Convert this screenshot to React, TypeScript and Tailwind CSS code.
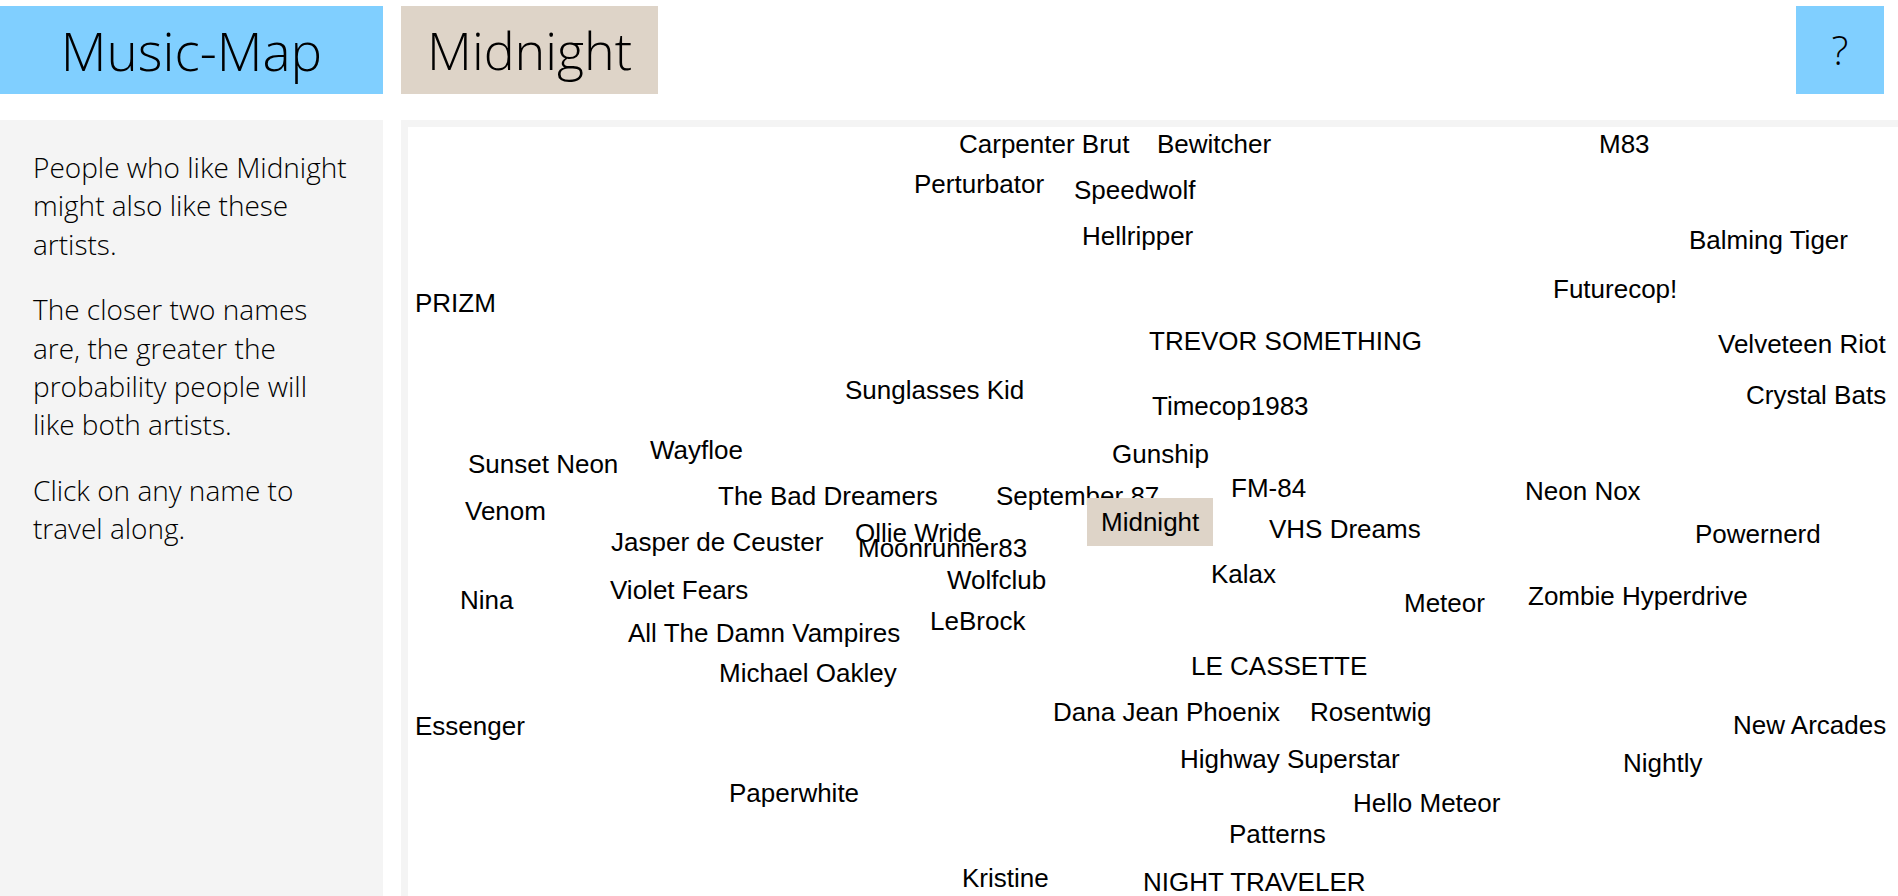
import { useState } from 'react';

type Artist = { name: string; x: number; y: number };

// positions on the map canvas, measured from its top-left corner
const ARTISTS: Artist[] = [
  { name: 'Carpenter Brut', x: 551, y: 2 },
  { name: 'Bewitcher', x: 749, y: 2 },
  { name: 'M83', x: 1191, y: 2 },
  { name: 'Perturbator', x: 506, y: 42 },
  { name: 'Speedwolf', x: 666, y: 48 },
  { name: 'Hellripper', x: 674, y: 94 },
  { name: 'Balming Tiger', x: 1281, y: 98 },
  { name: 'Futurecop!', x: 1145, y: 147 },
  { name: 'PRIZM', x: 7, y: 161 },
  { name: 'TREVOR SOMETHING', x: 741, y: 199 },
  { name: 'Velveteen Riot', x: 1310, y: 202 },
  { name: 'Sunglasses Kid', x: 437, y: 248 },
  { name: 'Crystal Bats', x: 1338, y: 253 },
  { name: 'Timecop1983', x: 744, y: 264 },
  { name: 'Wayfloe', x: 242, y: 308 },
  { name: 'Gunship', x: 704, y: 312 },
  { name: 'Sunset Neon', x: 60, y: 322 },
  { name: 'The Bad Dreamers', x: 310, y: 354 },
  { name: 'September 87', x: 588, y: 354 },
  { name: 'FM-84', x: 823, y: 346 },
  { name: 'Neon Nox', x: 1117, y: 349 },
  { name: 'Venom', x: 57, y: 369 },
  { name: 'Ollie Wride', x: 447, y: 391 },
  { name: 'VHS Dreams', x: 861, y: 387 },
  { name: 'Powernerd', x: 1287, y: 392 },
  { name: 'Jasper de Ceuster', x: 203, y: 400 },
  { name: 'Moonrunner83', x: 450, y: 406 },
  { name: 'Kalax', x: 803, y: 432 },
  { name: 'Wolfclub', x: 539, y: 438 },
  { name: 'Violet Fears', x: 202, y: 448 },
  { name: 'Zombie Hyperdrive', x: 1120, y: 454 },
  { name: 'Nina', x: 52, y: 458 },
  { name: 'Meteor', x: 996, y: 461 },
  { name: 'LeBrock', x: 522, y: 479 },
  { name: 'All The Damn Vampires', x: 220, y: 491 },
  { name: 'LE CASSETTE', x: 783, y: 524 },
  { name: 'Michael Oakley', x: 311, y: 531 },
  { name: 'Dana Jean Phoenix', x: 645, y: 570 },
  { name: 'Rosentwig', x: 902, y: 570 },
  { name: 'Essenger', x: 7, y: 584 },
  { name: 'New Arcades', x: 1325, y: 583 },
  { name: 'Highway Superstar', x: 772, y: 617 },
  { name: 'Nightly', x: 1215, y: 621 },
  { name: 'Paperwhite', x: 321, y: 651 },
  { name: 'Hello Meteor', x: 945, y: 661 },
  { name: 'Patterns', x: 821, y: 692 },
  { name: 'Kristine', x: 554, y: 736 },
  { name: 'NIGHT TRAVELER', x: 735, y: 740 },
];

export default function App() {
  const [current] = useState('Midnight');

  return (
    <div className="h-screen overflow-hidden bg-white text-black flex flex-col font-['Open_Sans',sans-serif] font-light">
      {/* Header */}
      <div className="flex items-start pt-[6px] shrink-0">
        <div className="w-[383px] h-[88px] bg-[#80cfff] flex items-center justify-center text-[53px] leading-none">
          Music-Map
        </div>
        <div className="ml-[18px] h-[88px] px-[26px] bg-[#ded4c8] flex items-center text-[52px] leading-none">
          {current}
        </div>
        <div className="ml-auto mr-[14px] w-[88px] h-[88px] bg-[#80cfff] flex items-center justify-center text-[40px] leading-none">
          ?
        </div>
      </div>

      {/* Body */}
      <div className="flex flex-1 mt-[26px] min-h-0">
        <aside className="w-[383px] shrink-0 bg-[#f4f4f4] pt-[28px] px-[33px] text-[28px] leading-[38.4px]">
          <p className="mb-[27px]">
            People who like {current} might also like these artists.
          </p>
          <p className="mb-[27px]">
            The closer two names are, the greater the probability people will
            like both artists.
          </p>
          <p>Click on any name to travel along.</p>
        </aside>

        <main className="flex-1 ml-[18px] bg-[#f4f4f4] pt-[7px] pl-[7px] min-w-0">
          <div className="relative h-full bg-white overflow-hidden font-['Liberation_Sans',Arial,sans-serif] font-normal text-[26px] leading-[30px]">
            {ARTISTS.map((a) => (
              <a
                key={a.name}
                className="absolute whitespace-nowrap cursor-pointer"
                style={{ left: a.x, top: a.y }}
              >
                {a.name}
              </a>
            ))}
            <div
              className="absolute bg-[#ded4c8] px-[14px] py-[9px] whitespace-nowrap"
              style={{ left: 679, top: 371 }}
            >
              {current}
            </div>
          </div>
        </main>
      </div>
    </div>
  );
}
